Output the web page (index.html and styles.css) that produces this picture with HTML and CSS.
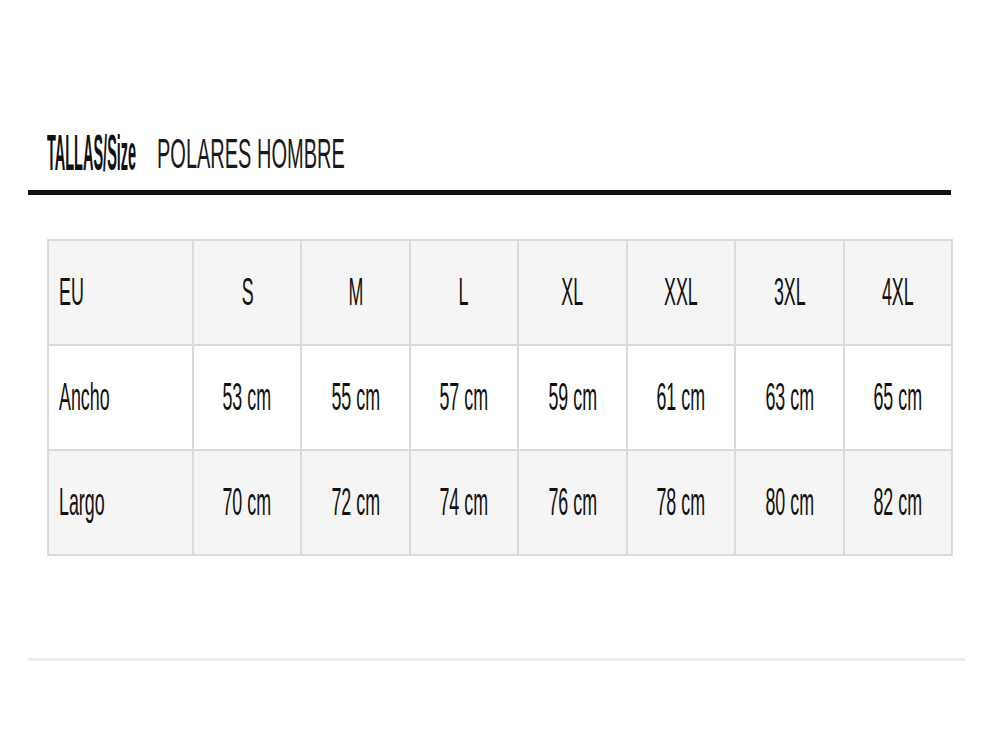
FILE: index.html
```html
<!DOCTYPE html>
<html>
<head>
<meta charset="utf-8">
<link rel="stylesheet" href="styles.css">
</head>
<body>
<div class="page">
  <div class="title">
    <div class="t-bold-box"><span class="t-bold">TALLAS/Size</span></div>
    <div class="t-reg-box"><span class="t-reg">POLARES HOMBRE</span></div>
  </div>
  <div class="rule"></div>
  <table class="sizes">
    <tr class="gray">
      <td class="first"><span class="c">EU</span></td><td><span class="c">S</span></td><td><span class="c">M</span></td><td><span class="c">L</span></td><td><span class="c">XL</span></td><td><span class="c">XXL</span></td><td><span class="c">3XL</span></td><td><span class="c">4XL</span></td>
    </tr>
    <tr>
      <td class="first"><span class="c">Ancho</span></td><td><span class="c">53 cm</span></td><td><span class="c">55 cm</span></td><td><span class="c">57 cm</span></td><td><span class="c">59 cm</span></td><td><span class="c">61 cm</span></td><td><span class="c">63 cm</span></td><td><span class="c">65 cm</span></td>
    </tr>
    <tr class="gray">
      <td class="first"><span class="c">Largo</span></td><td><span class="c">70 cm</span></td><td><span class="c">72 cm</span></td><td><span class="c">74 cm</span></td><td><span class="c">76 cm</span></td><td><span class="c">78 cm</span></td><td><span class="c">80 cm</span></td><td><span class="c">82 cm</span></td>
    </tr>
  </table>
  <div class="footline"></div>
</div>
</body>
</html>
```
FILE: styles.css
```css
html, body { margin: 0; padding: 0; background: #fff; }
.page { width: 989px; height: 732px; overflow: hidden; }
.title { padding: 128px 0 0 47px; height: 50px; display: flex; align-items: center; font-family: "Liberation Sans", sans-serif; color: #111; }
.t-bold-box { width: 110px; }
.t-bold { display: inline-block; font-weight: bold; font-size: 50px; line-height: 50px; transform: scaleX(0.29); transform-origin: left center; white-space: nowrap; }
.t-reg-box { width: 200px; }
.t-reg { display: inline-block; font-size: 43px; line-height: 50px; transform: scaleX(0.465); transform-origin: left center; white-space: nowrap; color: #1a1a1a; }
.rule { margin: 12px 0 0 28px; width: 923px; height: 5px; background: #111; }
.sizes { margin: 44px 0 0 47px; width: 906px; table-layout: fixed; border-collapse: collapse; font-family: "Liberation Sans", sans-serif; font-size: 38px; color: #111; }
.sizes td { border: 2px solid #dadada; height: 103px; text-align: center; padding: 0; white-space: nowrap; overflow: visible; }
.sizes td.first { width: 133px; text-align: left; padding-left: 10px; }
.sizes td.first .c { transform-origin: left center; }
.sizes .c { display: inline-block; transform: scaleX(0.47); transform-origin: center center; }
.sizes tr.gray td { background: #f5f5f5; }
.footline { margin: 102px 0 0 28px; width: 937px; height: 3px; background: #eeeeee; }
```
